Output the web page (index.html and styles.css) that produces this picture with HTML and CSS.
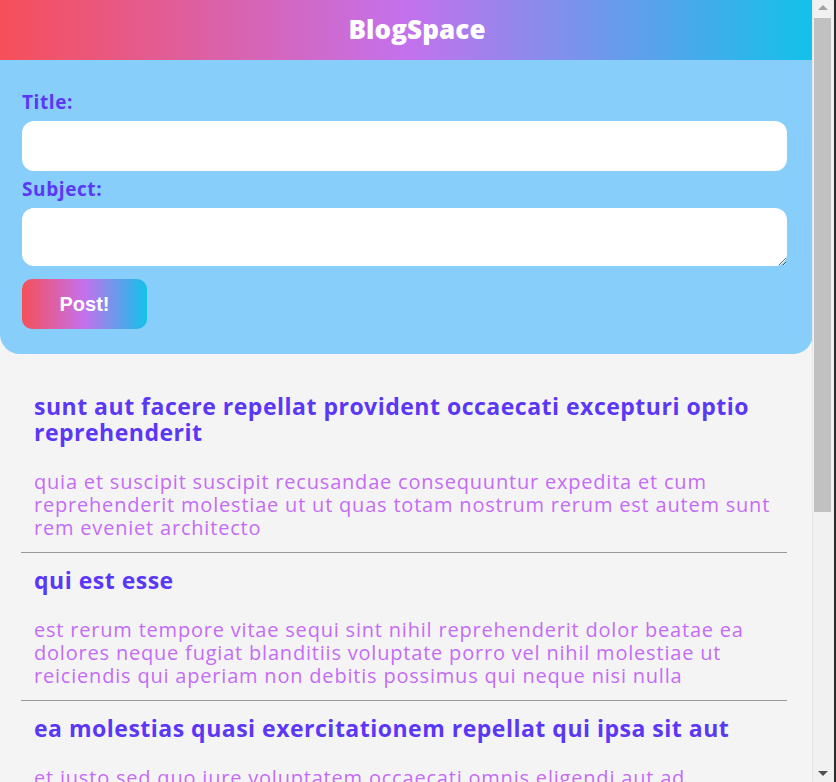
FILE: index.html
```html
<!DOCTYPE html>
<html lang="en">
<head>
<meta charset="utf-8">
<title>BlogSpace</title>
<link rel="stylesheet" href="styles.css">
</head>
<body>
<div class="app">
  <header class="topbar">
    <h1 class="brand">BlogSpace</h1>
  </header>
  <form class="post-form">
    <label class="field-label" for="title">Title:</label>
    <input class="field-input" id="title" type="text">
    <label class="field-label" for="body">Subject:</label>
    <textarea class="field-area" id="body"></textarea>
    <button class="post-btn" type="button">Post!</button>
  </form>
  <main class="posts">
    <article class="post">
      <h2 class="post-title">sunt aut facere repellat provident occaecati excepturi optio reprehenderit</h2>
      <p class="post-body">quia et suscipit suscipit recusandae consequuntur expedita et cum reprehenderit molestiae ut ut quas totam nostrum rerum est autem sunt rem eveniet architecto</p>
    </article>
    <article class="post">
      <h2 class="post-title">qui est esse</h2>
      <p class="post-body">est rerum tempore vitae sequi sint nihil reprehenderit dolor beatae ea dolores neque fugiat blanditiis voluptate porro vel nihil molestiae ut reiciendis qui aperiam non debitis possimus qui neque nisi nulla</p>
    </article>
    <article class="post">
      <h2 class="post-title">ea molestias quasi exercitationem repellat qui ipsa sit aut</h2>
      <p class="post-body">et iusto sed quo iure voluptatem occaecati omnis eligendi aut ad voluptatem doloribus vel accusantium quis pariatur molestiae porro eius odio et labore et velit aut</p>
    </article>
    <article class="post">
      <h2 class="post-title">eum et est occaecati</h2>
      <p class="post-body">ullam et saepe reiciendis voluptatem adipisci sit amet autem assumenda provident rerum culpa quis hic commodi nesciunt rem tenetur doloremque ipsam iure quis sunt voluptatem rerum illo velit</p>
    </article>
  </main>
</div>
<div class="scrollbar" aria-hidden="true">
  <span class="sb-arrow sb-up"></span>
  <span class="sb-thumb"></span>
  <span class="sb-arrow sb-down"></span>
</div>
</body>
</html>
```
FILE: styles.css
```css
html {
  background: #f4f4f4;
}
body {
  margin: 0;
  background: #f4f4f4;
  font-family: "Open Sans", "DejaVu Sans", sans-serif;
  overflow: hidden;
}
.app {
  width: 813px;
}
.topbar {
  height: 60px;
  display: flex;
  align-items: center;
  justify-content: center;
  background: linear-gradient(to right, #f64f59, #c471ed, #12c2e9);
  padding-left: 21px;
}
.brand {
  margin: 0 0 3px;
  color: #fff;
  font-size: 26px;
  font-weight: 800;
  letter-spacing: 0.1px;
}
.post-form {
  background: #87cefa;
  display: flex;
  flex-direction: column;
  align-items: flex-start;
  padding: 31px 26px 25px 22px;
  border-radius: 0 0 20px 20px;
}
.field-label {
  font-size: 19px;
  line-height: 22px;
  font-weight: 700;
  letter-spacing: 0.6px;
  color: #5b37f6;
  margin-bottom: 8px;
}
.field-input,
.field-area {
  box-sizing: border-box;
  width: 100%;
  border: none;
  border-radius: 12px;
  background: #fff;
  font-family: inherit;
  font-size: 16px;
  padding: 8px 12px;
  margin: 0 0 7px 0;
  outline: none;
}
.field-input {
  height: 50px;
}
.field-area {
  height: 58px;
  display: block;
  margin-bottom: 13px;
}
.post-btn {
  width: 125px;
  height: 50px;
  border: none;
  border-radius: 10px;
  background: linear-gradient(to right, #f64f59, #c471ed, #12c2e9);
  color: #fff;
  font-family: "Liberation Sans", Arial, sans-serif;
  font-weight: 700;
  font-size: 20px;
}
.posts {
  padding: 25px 26px 0 21px;
}
.post {
  padding: 14px 13px 13px;
  border-bottom: 1px solid #9a9a9a;
}
.post-title {
  margin: 0 0 25px;
  font-size: 23px;
  line-height: 26px;
  font-weight: 700;
  letter-spacing: 0.5px;
  color: #5b37f6;
}
.post-body {
  margin: 0;
  font-size: 20px;
  line-height: 23px;
  letter-spacing: 0.8px;
  color: #c46cf4;
}
.scrollbar {
  position: fixed;
  top: 0;
  right: 0;
  width: 21px;
  height: 100%;
  background: #f1f1f1;
  border-right: 2px solid #2b2b2b;
  border-left: 1px solid #e6e6e6;
}
.sb-thumb {
  position: absolute;
  left: 1px;
  width: 17px;
  top: 18px;
  height: 494px;
  background: #c1c1c1;
}
.sb-arrow {
  position: absolute;
  left: 5px;
  width: 0;
  height: 0;
  border-left: 5px solid transparent;
  border-right: 5px solid transparent;
}
.sb-up {
  top: 5px;
  border-bottom: 5px solid #a3a3a3;
}
.sb-down {
  bottom: 6px;
  border-top: 5px solid #505050;
}
```
